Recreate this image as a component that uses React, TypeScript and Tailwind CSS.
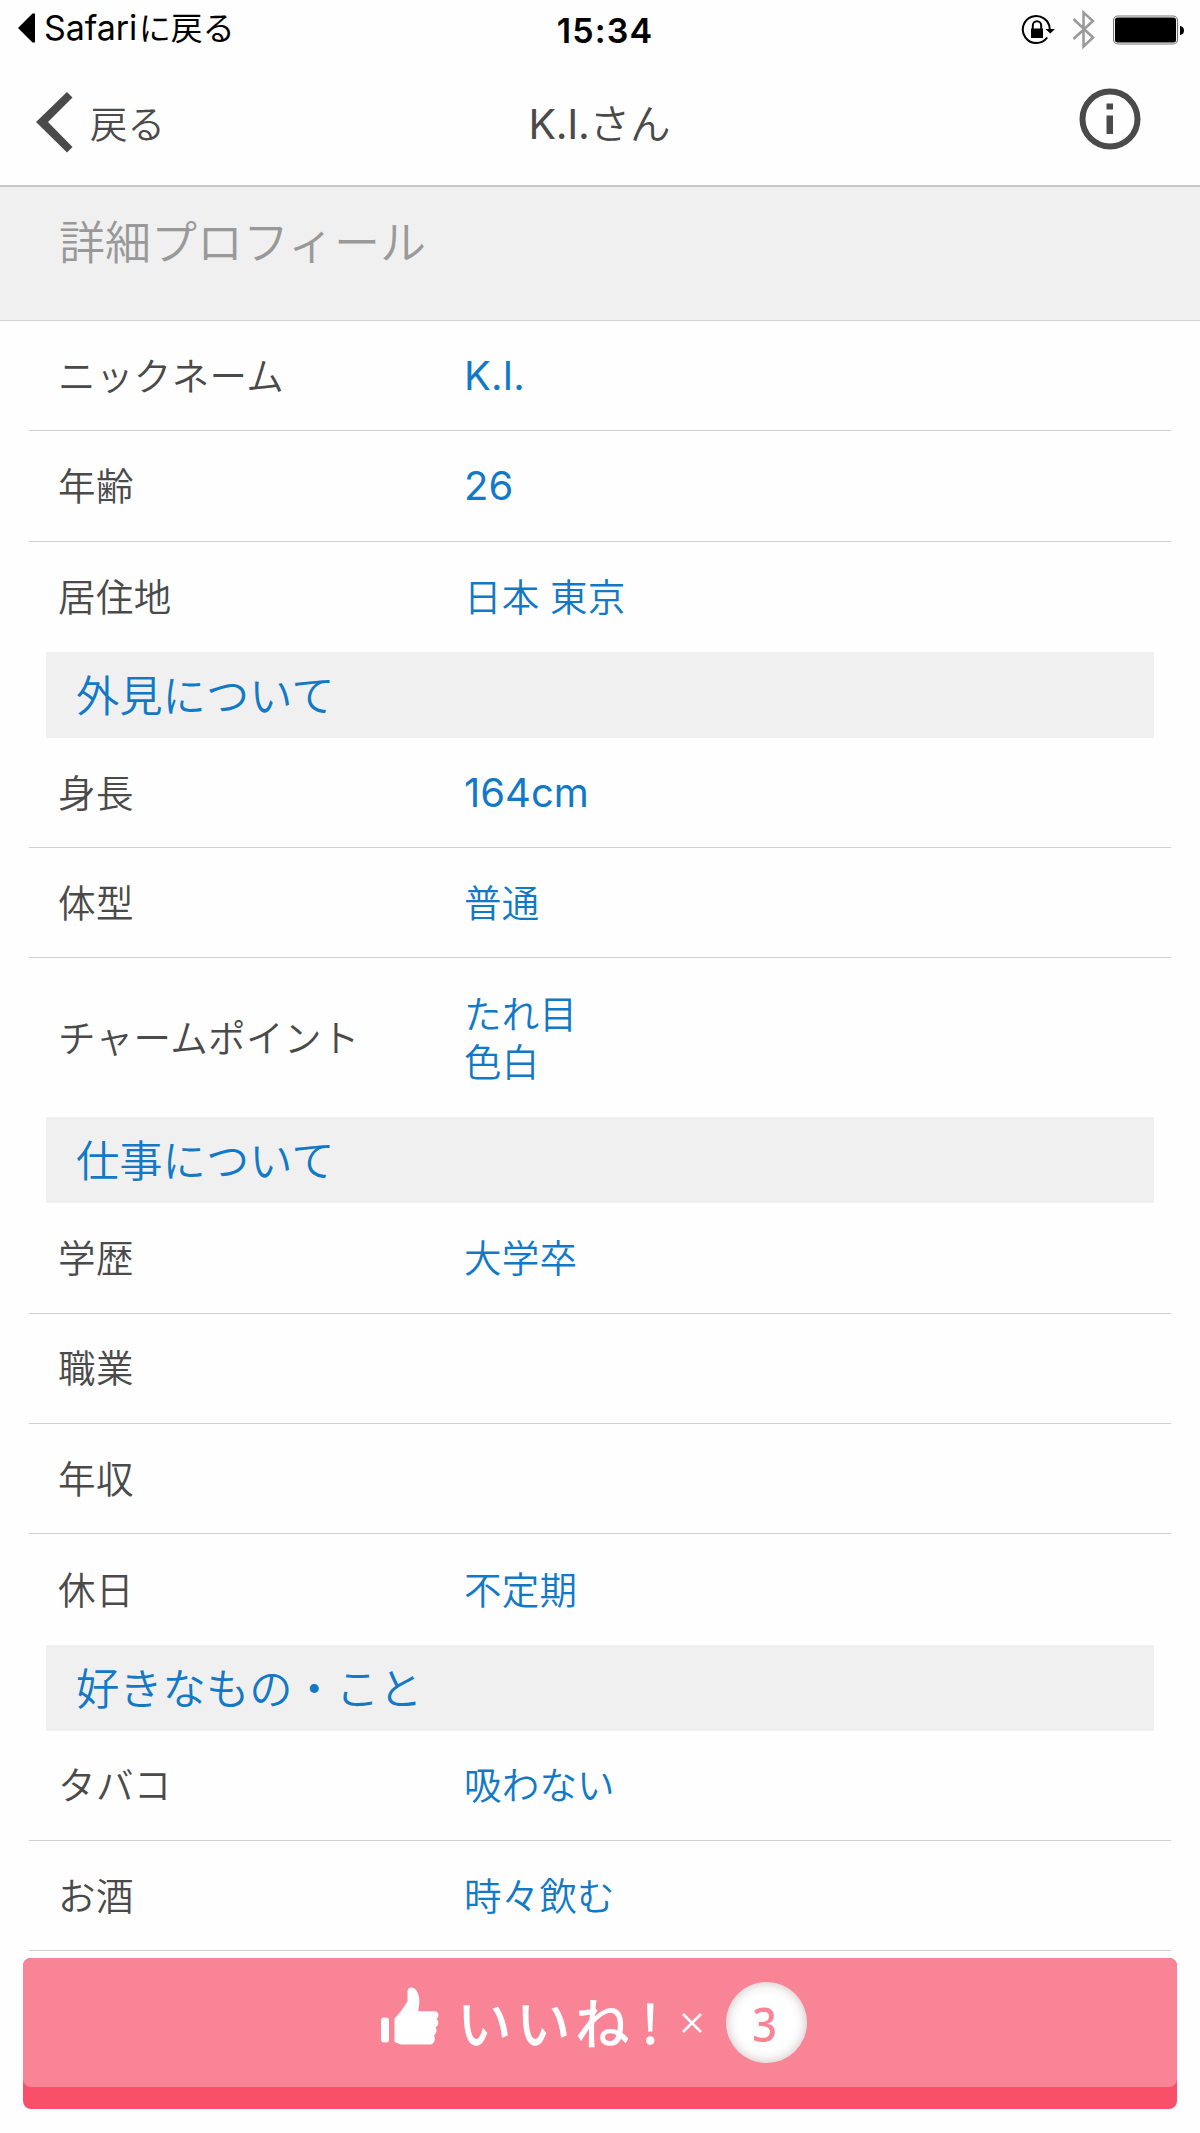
import React from "react";

type Row = { label: string; value?: string[]; latin?: boolean };
type Section = { title?: string; rows: Row[] };

const JP = "font-['Noto_Sans_CJK_JP',sans-serif] font-[350]";
const LATIN = "font-['Inter',sans-serif]";

const sections: Section[] = [
  {
    rows: [
      { label: "ニックネーム", value: ["K.I."], latin: true },
      { label: "年齢", value: ["26"], latin: true },
      { label: "居住地", value: ["日本 東京"] },
    ],
  },
  {
    title: "外見について",
    rows: [
      { label: "身長", value: ["164cm"], latin: true },
      { label: "体型", value: ["普通"] },
      { label: "チャームポイント", value: ["たれ目", "色白"] },
    ],
  },
  {
    title: "仕事について",
    rows: [
      { label: "学歴", value: ["大学卒"] },
      { label: "職業" },
      { label: "年収" },
      { label: "休日", value: ["不定期"] },
    ],
  },
  {
    title: "好きなもの・こと",
    rows: [
      { label: "タバコ", value: ["吸わない"] },
      { label: "お酒", value: ["時々飲む"] },
    ],
  },
];

function StatusBar() {
  return (
    <div className="grid h-[60px] grid-cols-3 text-black">
      <div className="flex h-[56px] items-center pl-[18px]">
        <svg width="17" height="30" viewBox="0 0 17 30" className="mr-[9px]">
          <path d="M0 15 14.500.5H17V29.500H14.500Z" fill="#000" />
        </svg>
        <span className={`${LATIN} text-[34px] leading-none tracking-[-0.1px]`}>Safari</span>
        <span className="ml-[2px] pb-[3px] font-['Noto_Sans_CJK_JP',sans-serif] text-[31.8px] leading-none">に戻る</span>
      </div>
      <div className="flex h-[61px] items-center justify-center pl-[10px]">
        <span className={`${LATIN} text-[34px] leading-none font-semibold tracking-[1.1px]`}>15:34</span>
      </div>
      <div className="flex h-[59px] items-center justify-end pr-[16px]">
        <svg width="34" height="32" viewBox="1021 13 34 32" className="mr-[17px]">
          <path d="M1047.200 36.500A13.500 13.500 0 1 1 1049.800 28" fill="none" stroke="#000" strokeWidth="2" />
          <path d="M1045.500 28H1055L1050.300 32.500Z" fill="#000" />
          <rect x="1031" y="27.500" width="12" height="9.500" fill="#000" />
          <path d="M1032.800 28V24.500A4.200 4.200 0 0 1 1041.200 24.500V28" fill="none" stroke="#000" strokeWidth="2" />
        </svg>
        <svg width="24" height="41" viewBox="1072 9 24 41" className="mr-[17px]">
          <path
            d="M1073.500 19 1093 37.500 1083.500 46.500V12.500L1093 21 1073.500 39"
            fill="none"
            stroke="#999"
            strokeWidth="2.500"
          />
        </svg>
        <svg width="71" height="30" viewBox="1113 14.500 71 30">
          <rect x="1113.500" y="15.500" width="64" height="28" rx="4.500" fill="#fff" stroke="#777" strokeWidth="1.200" />
          <rect x="1115" y="17" width="61" height="25" rx="2.500" fill="#000" />
          <path d="M1180 25.500Q1184 26 1184 30T1180 34.500Z" fill="#000" />
        </svg>
      </div>
    </div>
  );
}

function NavBar() {
  return (
    <div className="grid h-[127px] grid-cols-3 border-b-2 border-[#c8c8c8] text-[#4a4a4a]">
      <div className="flex h-[124px] items-center pl-[36px]">
        <svg width="37" height="61" viewBox="36 92 37 61" className="mr-[17px]">
          <path d="M67 92 72.500 97.500 48 122 72.500 147 67 152.500 36 122Z" fill="#4a4a4a" />
        </svg>
        <span className={`${JP} text-[37.5px] leading-none`}>戻る</span>
      </div>
      <div className={`${JP} flex h-[128px] items-center justify-center pr-[1px]`}>
        <span className={`${LATIN} text-[41px] leading-none font-normal tracking-[-0.3px]`}>K.I.</span>
        <span className="pb-[3px] text-[40.5px] leading-none">さん</span>
      </div>
      <div className="flex h-[118px] items-center justify-end pr-[59px]">
        <svg width="62" height="62" viewBox="0 0 62 62">
          <circle cx="31" cy="31" r="27.500" fill="none" stroke="#4a4a4a" strokeWidth="6" />
          <path d="M27.500 15.500h6.500v6h-6.500zM27.500 27.500h6.500v18.500h-6.500z" fill="#4a4a4a" />
        </svg>
      </div>
    </div>
  );
}

function ProfileRow({ row, last }: { row: Row; last: boolean }) {
  const tall = (row.value?.length ?? 0) > 1;
  return (
    <div
      className={`mx-[29px] flex items-center pl-[29px] ${tall ? "h-[159px]" : "h-[110.3px]"} ${
        last ? "" : "border-b-[1.5px] border-[#d0d0d0]"
      }`}
    >
      <div className={`${JP} w-[406px] pb-[4px] text-[37.5px] leading-[48px] tracking-[0.4px] text-[#4a4a4a]`}>
        {row.label}
      </div>
      <div
        className={`text-[#1279c6] ${
          row.latin
            ? `${LATIN} pt-[1px] text-[40px] leading-[48px]`
            : `${JP} pb-[4px] text-[37.5px] leading-[48px] tracking-[0.2px] [word-spacing:2px]`
        }`}
      >
        {row.value?.map((line) => <div key={line}>{line}</div>)}
      </div>
    </div>
  );
}

function LikeButton() {
  return (
    <div className="mx-[23px] mt-[7px] h-[151px] rounded-[8px] bg-[#f9506a]">
      <button className="flex h-[129px] w-full items-center rounded-[8px] bg-[#f98495] pl-[358px] text-white">
        <svg width="58" height="58" viewBox="0 0 58 58" className="mr-[18px] -mt-[13px]">
          <rect x="0" y="30.500" width="8" height="25" rx="3" fill="#fff" />
          <path
            d="M13.500 31.500C19 26 22 21 26.500 14.500V4.500C26.500-1 33 -.5 35.500 3.500 39.500 10 38.500 16 37.200 24.300H54C58 24.500 58.500 30 55.500 32 58.500 34.500 57.500 39 54.500 40.500 56.500 43 55.500 46.500 53 48 55 52 53 57.500 49 57.500H20L13.500 55Z"
            fill="#fff"
          />
        </svg>
        <span className="pb-[3px] font-['Noto_Sans_CJK_JP',sans-serif] text-[54.5px] leading-none font-medium tracking-[4.5px]">いいね</span>
        <span className="ml-[7px] pb-[3px] font-['Noto_Sans_CJK_JP',sans-serif] text-[54px] leading-none font-medium">!</span>
        <svg width="20" height="20" viewBox="0 0 20 20" className="ml-[22px]">
          <path d="M1 1 19 19M19 1 1 19" stroke="#fff" strokeWidth="2.500" />
        </svg>
        <span className="ml-[24px] flex size-[81px] items-center justify-center rounded-full bg-white pt-[2px] pr-[2px] font-['Noto_Sans',sans-serif] text-[48px] leading-none font-medium text-[#f98495] shadow-[inset_0_0_12px_rgba(110,60,60,0.35)]">
          <span className="scale-x-90">3</span>
        </span>
      </button>
    </div>
  );
}

export default function App() {
  return (
    <div className="h-[2133px] w-[1200px] overflow-hidden bg-[#fefefe]">
      <StatusBar />
      <NavBar />
      <div className="flex h-[134px] items-center bg-[#f0f0f0] pb-[30px] pl-[59px] shadow-[inset_0_-1px_0_#d4d4d4]">
        <h1 className={`${JP} text-[46px] leading-none text-[#999]`}>詳細プロフィール</h1>
      </div>
      {sections.map((section, s) => (
        <section key={s}>
          {section.title && (
            <h2
              className={`${JP} mx-[46px] flex h-[86px] items-center bg-[#f0f0f0] pb-[3px] pl-[30px] text-[43.3px] leading-none text-[#1279c6]`}
            >
              {section.title}
            </h2>
          )}
          {section.rows.map((row, i) => (
            <ProfileRow
              key={row.label}
              row={row}
              last={i === section.rows.length - 1 && s < sections.length - 1}
            />
          ))}
        </section>
      ))}
      <LikeButton />
    </div>
  );
}
